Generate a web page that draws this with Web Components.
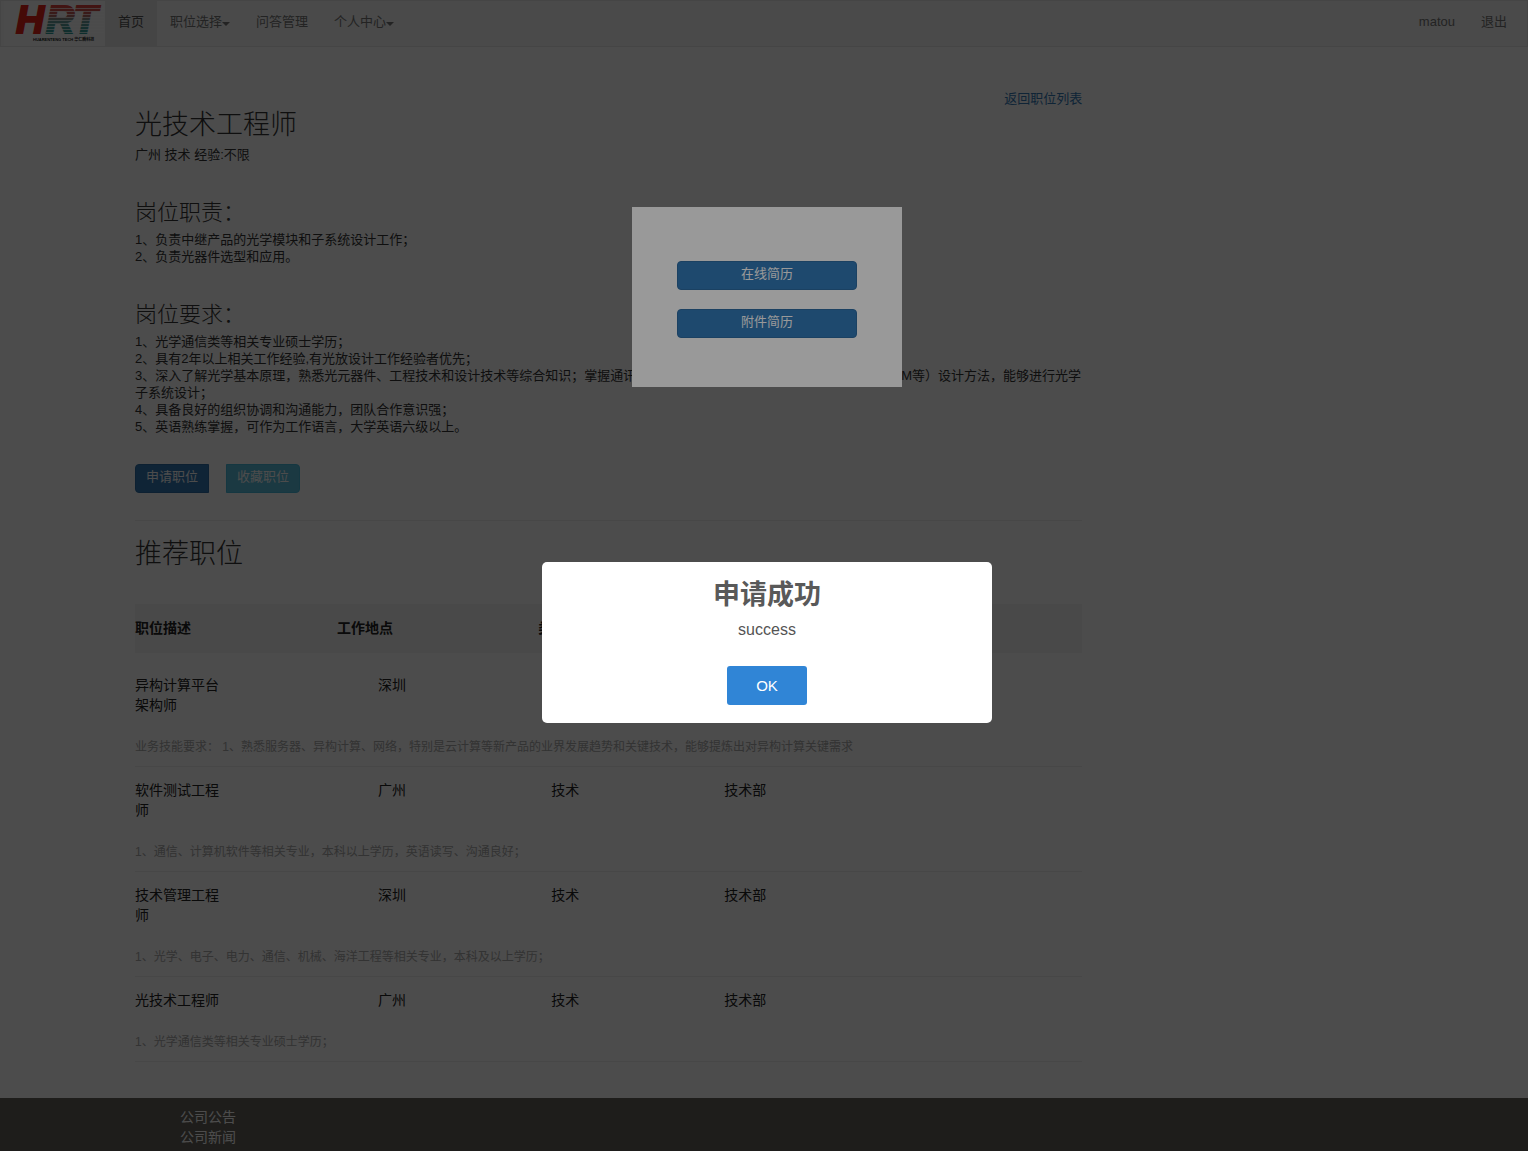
<!DOCTYPE html>
<html lang="zh-CN">
<head>
<meta charset="utf-8">
<title>光技术工程师</title>
<style>
  html, body { margin: 0; }
  body {
    font-family: "Liberation Sans", "Noto Sans CJK SC", sans-serif;
    font-size: 13px;
    line-height: 17px;
    color: #333;
    background: #fff;
  }
</style>
</head>
<body>
<hr-app></hr-app>

<template id="t-app">
  <style>
    :host { display: flex; flex-direction: column; min-height: 100vh; }
    main { box-sizing: border-box; width: 62%; margin: 43px 0 36px 135px; flex: 1 0 auto; }
    .back { text-align: right; }
    a { color: #337ab7; text-decoration: none; }
    h1, h2 { margin: 3px 0 0; font-size: 27px; line-height: 30px; font-weight: 300; }
    p { margin: 0; }
    .meta { margin-top: 6px; }
    .actions { display: flex; gap: 17px; margin-top: 29px; }
    hr { border: 0; border-top: 1px solid #eee; margin: 27px 0 18px; }
    h2 { margin: 0 0 35px; }
  </style>
  <hr-navbar></hr-navbar>
  <main>
    <div class="back"><a href="#jobs">返回职位列表</a></div>
    <h1>光技术工程师</h1>
    <p class="meta">广州 技术 经验:不限</p>
    <hr-section heading="岗位职责：">
      <p>1、负责中继产品的光学模块和子系统设计工作；</p>
      <p>2、负责光器件选型和应用。</p>
    </hr-section>
    <hr-section heading="岗位要求：">
      <p>1、光学通信类等相关专业硕士学历；</p>
      <p>2、具有2年以上相关工作经验,有光放设计工作经验者优先；</p>
      <p>3、深入了解光学基本原理，熟悉光元器件、工程技术和设计技术等综合知识；掌握通讯光模块（光放大器、相干光源、波分复用DWDM等）设计方法，能够进行光学子系统设计；</p>
      <p>4、具备良好的组织协调和沟通能力，团队合作意识强；</p>
      <p>5、英语熟练掌握，可作为工作语言，大学英语六级以上。</p>
    </hr-section>
    <div class="actions">
      <hr-button variant="first">申请职位</hr-button>
      <hr-button variant="info">收藏职位</hr-button>
    </div>
    <hr>
    <h2>推荐职位</h2>
    <hr-job-table></hr-job-table>
  </main>
  <hr-footer></hr-footer>
  <hr-overlay class="resume" style="--shade: rgba(0,0,0,.5); --top: 207px">
    <hr-resume-dialog></hr-resume-dialog>
  </hr-overlay>
  <hr-overlay style="--shade: rgba(0,0,0,.4); --top: 562px">
    <hr-alert heading="申请成功">success</hr-alert>
  </hr-overlay>
</template>

<template id="t-navbar">
  <style>
    :host { display: block; }
    nav { display: flex; box-sizing: border-box; height: 47px; border: 1px solid #e7e7e7; background: #f8f8f8; padding: 0 7px 0 3px; }
    a.brand { display: block; width: 101px; height: 45px; padding: 0; background: #fdfdfd; }
    svg { display: block; overflow: visible; }
    ul { display: flex; list-style: none; margin: 0; padding: 0; }
    ul.right { margin-left: auto; }
    a { display: flex; align-items: center; height: 41px; padding: 0 13px 4px; color: #777; text-decoration: none; }
    a.active { color: #555; background: #e7e7e7; }
    .caret::after { content: ""; border: 4px solid transparent; border-top-color: currentColor; border-bottom: 0; margin-top: 4px; }
  </style>
  <nav>
    <a class="brand" href="#" aria-label="HRT">
      <svg width="100" height="45" viewBox="0 0 100 45">
        <defs>
          <linearGradient id="rt" x1="0" y1="4" x2="0" y2="33" gradientUnits="userSpaceOnUse">
            <stop offset="0" stop-color="#e2403a"/>
            <stop offset=".35" stop-color="#b9605c"/>
            <stop offset=".55" stop-color="#6c9c9a"/>
            <stop offset="1" stop-color="#2b9a98"/>
          </linearGradient>
        </defs>
        <g font-family="Liberation Sans, sans-serif" font-weight="700" font-style="italic" font-size="39">
          <text x="12" y="32" fill="#e8221a" stroke="#e8221a" stroke-width="2">H</text>
          <text x="42" y="32" fill="url(#rt)" stroke="url(#rt)" stroke-width="2">RT</text>
        </g>
        <path d="M42 7.500H100M42 10.500H100M42 13.500H100M42 16.500H100M42 19.500H100M42 22.500H100M42 25.500H100M42 28.500H100M42 31.500H100" stroke="#fdfdfd" stroke-width="1" stroke-opacity=".7"/>
        <text x="29" y="40" font-size="4" font-weight="700" fill="#222" font-family="Liberation Sans, Noto Sans CJK SC, sans-serif">HUARENTENG TECH 华仁腾科技</text>
      </svg>
    </a>
    <ul>
      <li><a class="active" href="#">首页</a></li>
      <li><a class="caret" href="#">职位选择</a></li>
      <li><a href="#">问答管理</a></li>
      <li><a class="caret" href="#">个人中心</a></li>
    </ul>
    <ul class="right">
      <li><a href="#">matou</a></li>
      <li><a href="#">退出</a></li>
    </ul>
  </nav>
</template>

<template id="t-section">
  <style>
    :host { display: block; margin-top: 38px; }
    h3 { margin: 0 0 6px; font-size: 22px; line-height: 24px; font-weight: 300; }
  </style>
  <h3></h3>
  <slot></slot>
</template>

<template id="t-button">
  <style>
    :host { display: block; }
    button { display: block; box-sizing: border-box; width: 100%; height: 29px; padding: 0 10px 4px; font: inherit; color: #fff; background: #337ab7; border: 1px solid #2e6da4; border-radius: 4px; }
    :host([variant="first"]) button { border-radius: 4px 0 0 4px; }
    :host([variant="info"]) button { background: #5bc0de; border-color: #46b8da; border-radius: 0 4px 4px 0; }
  </style>
  <button type="button"><slot></slot></button>
</template>

<template id="t-table">
  <style>
    :host { display: block; }
    table, thead, tbody { display: block; }
    tr { display: grid; }
    th, td { display: block; padding: 0; text-align: left; font-size: 14px; line-height: 20px; }
    thead tr { grid-template-columns: 202fr 201fr 201fr 343fr; padding: 14px 0 15px; margin-bottom: 9px; background: #f5f5f5; color: #222; }
    th { font-weight: 700; }
    tr.job { grid-template-columns: 243fr 173fr 173fr 358fr; padding-top: 13px; color: #222; }
    .job td:first-child { max-width: 90px; }
    tr.note { border-bottom: 1px solid #eee; padding: 24px 0 10px; color: #aaa; }
    .note td { font-size: 12px; line-height: 17px; }
  </style>
  <table>
    <thead><tr><th>职位描述</th><th>工作地点</th><th>类别</th><th>部门</th></tr></thead>
    <tbody></tbody>
  </table>
</template>

<template id="t-footer">
  <style>
    :host { display: block; background: #64625c; padding: 9px 180px 5px; font-size: 14px; line-height: 20px; }
    ul { list-style: none; margin: 0; padding: 0; }
    a { color: #fff; text-decoration: none; }
  </style>
  <footer><ul><li><a href="#">公司公告</a></li><li><a href="#">公司新闻</a></li></ul></footer>
</template>

<template id="t-overlay">
  <style>
    :host { position: fixed; inset: 0; display: flex; justify-content: center; align-items: flex-start; padding: var(--top) 0 0 6px; background: var(--shade); }
  </style>
  <slot></slot>
</template>

<template id="t-resume">
  <style>
    :host { display: flex; flex-direction: column; gap: 19px; box-sizing: border-box; width: 270px; height: 180px; padding: 54px 45px; background: #fff; }
  </style>
  <hr-button>在线简历</hr-button>
  <hr-button>附件简历</hr-button>
</template>

<template id="t-alert">
  <style>
    :host { display: flex; flex-direction: column; align-items: center; box-sizing: border-box; width: 450px; padding: 17px 16px 18px; border-radius: 5px; background: #fff; color: #545454; }
    h2 { margin: 0; color: #595959; font-size: 27px; line-height: 32px; font-weight: 700; }
    p { margin: 9px 0 26px; font-size: 16px; line-height: 20px; }
    button { width: 80px; height: 39px; border: 0; border-radius: 3px; background: #3085d6; color: #fff; font: inherit; font-size: 15px; }
  </style>
  <h2></h2>
  <p><slot></slot></p>
  <button type="button">OK</button>
</template>

<script>
  class TemplateElement extends HTMLElement {
    constructor() {
      super();
      this.attachShadow({ mode: "open" })
        .append(document.getElementById(this.constructor.template).content.cloneNode(true));
    }
    connectedCallback() {
      const heading = this.getAttribute("heading");
      if (heading) this.shadowRoot.querySelector("h2, h3").textContent = heading;
    }
  }

  class JobTable extends TemplateElement {
    static template = "t-table";
    static jobs = [
      ["异构计算平台架构师", "深圳", "技术", "技术部", "业务技能要求： 1、熟悉服务器、异构计算、网络，特别是云计算等新产品的业界发展趋势和关键技术，能够提炼出对异构计算关键需求"],
      ["软件测试工程师", "广州", "技术", "技术部", "1、通信、计算机软件等相关专业，本科以上学历，英语读写、沟通良好；"],
      ["技术管理工程师", "深圳", "技术", "技术部", "1、光学、电子、电力、通信、机械、海洋工程等相关专业，本科及以上学历；"],
      ["光技术工程师", "广州", "技术", "技术部", "1、光学通信类等相关专业硕士学历；"]
    ];
    connectedCallback() {
      const body = this.shadowRoot.querySelector("tbody");
      body.replaceChildren();
      for (const job of JobTable.jobs) {
        const row = body.insertRow();
        row.className = "job";
        job.slice(0, 4).forEach(text => { row.insertCell().textContent = text; });
        const note = body.insertRow();
        note.className = "note";
        const cell = note.insertCell();
        cell.colSpan = 4;
        cell.textContent = job[4];
      }
    }
  }

  const define = (name, template) =>
    customElements.define(name, class extends TemplateElement { static template = template; });

  define("hr-navbar", "t-navbar");
  define("hr-section", "t-section");
  define("hr-button", "t-button");
  define("hr-footer", "t-footer");
  define("hr-overlay", "t-overlay");
  define("hr-resume-dialog", "t-resume");
  define("hr-alert", "t-alert");
  customElements.define("hr-job-table", JobTable);
  define("hr-app", "t-app");
</script>
</body>
</html>
